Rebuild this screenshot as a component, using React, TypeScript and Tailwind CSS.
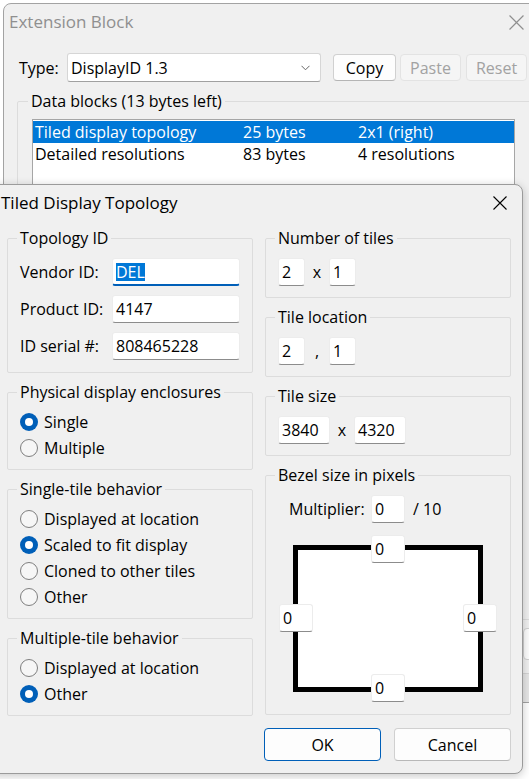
import React from "react";

const FONT = "font-['Open_Sans',sans-serif] text-[16px] text-black";

function CloseIcon({ size = 14, color = "#000" }: { size?: number; color?: string }) {
  return (
    <svg width={size} height={size} viewBox="0 0 14 14">
      <path d="M0.5 0.5 L13.5 13.5 M13.5 0.5 L0.5 13.5" stroke={color} strokeWidth="1.1" fill="none" />
    </svg>
  );
}

function Edit({
  value,
  className = "",
  focused = false,
}: {
  value: string;
  className?: string;
  focused?: boolean;
}) {
  return (
    <div
      className={`h-[28px] bg-white border border-[#ececec] rounded-[3px] flex items-center pl-[3px] leading-none ${
        focused ? "border-b-2 border-b-[#005fb8]" : "border-b-[#8c8c8c]"
      } ${className}`}
    >
      {focused ? <span className="bg-[#0078d7] text-white leading-[18px]">{value}</span> : value}
    </div>
  );
}

function Radio({ label, checked = false }: { label: string; checked?: boolean }) {
  return (
    <div className="h-[26px] flex items-center gap-[6px]">
      <span
        className={`w-[18px] h-[18px] rounded-full flex items-center justify-center ${
          checked ? "bg-[#005fb8]" : "border border-[#7f7f7f] bg-[#f6f6f6]"
        }`}
      >
        {checked && <span className="w-[8px] h-[8px] rounded-full bg-white" />}
      </span>
      <span>{label}</span>
    </div>
  );
}

function Group({
  title,
  children,
  className = "",
}: {
  title: string;
  children: React.ReactNode;
  className?: string;
}) {
  return (
    <fieldset className={`border border-[#dcdcdc] rounded-[2px] pl-[9px] pr-[9px] ${className}`}>
      <legend className="px-[3px] leading-[22px]">{title}</legend>
      <div className="pl-[3px]">{children}</div>
    </fieldset>
  );
}

function PairRow({ a, b, sep, wide = false }: { a: string; b: string; sep: string; wide?: boolean }) {
  const w = wide ? "w-[52px]" : "w-[27px]";
  return (
    <div className="flex items-center">
      <Edit value={a} className={w} />
      <span className="w-[24px] text-center">{sep}</span>
      <Edit value={b} className={w} />
    </div>
  );
}

function BackWindow() {
  const rows = [
    ["Tiled display topology", "25 bytes", "2x1 (right)"],
    ["Detailed resolutions", "83 bytes", "4 resolutions"],
  ];
  return (
    <div className="absolute left-[3px] top-[3px] w-[537px] h-[700px] bg-[#f0f0f0] border border-[#a3a3a3] rounded-tl-[8px] overflow-hidden">
      <div className="h-[36px] flex items-center justify-between pl-[5px]">
        <span className="text-[#8f8f8f] text-[17px]">Extension Block</span>
        <div className="w-[46px] h-full flex items-center justify-center">
          <CloseIcon size={15} color="#8f8f8f" />
        </div>
      </div>

      <div className="mt-[13px] pl-[15px] flex items-center h-[29px]">
        <span className="w-[48px]">Type:</span>
        <div className="w-[254px] h-[29px] bg-white border border-[#d6d6d6] border-b-[#a0a0a0] rounded-[3px] flex items-center justify-between pl-[3px] pr-[10px]">
          <span>DisplayID 1.3</span>
          <svg width="9" height="6" viewBox="0 0 9 6">
            <path d="M0.5 0.8 L4.5 4.8 L8.5 0.8" stroke="#666" strokeWidth="1" fill="none" />
          </svg>
        </div>
        <button className="ml-[12px] w-[63px] h-[27px] bg-[#fdfdfd] border border-[#d0d0d0] border-b-[#b5b5b5] rounded-[4px]">
          Copy
        </button>
        <button className="ml-[4px] w-[61px] h-[27px] bg-[#f5f5f5] border border-[#e3e3e3] rounded-[4px] text-[#a2a2a2]">
          Paste
        </button>
        <button className="ml-[5px] w-[61px] h-[27px] bg-[#f5f5f5] border border-[#e3e3e3] rounded-[4px] text-[#a2a2a2]">
          Reset
        </button>
      </div>

      <fieldset className="mt-[8px] ml-[13px] w-[515px] border border-[#dcdcdc] rounded-[2px] pl-[10px] pt-[7px]">
        <legend className="px-[3px] leading-[22px]">Data blocks (13 bytes left)</legend>
        <div className="ml-[4px] w-[483px] h-[420px] bg-white border border-[#a6a6a6] pt-[1px]">
          {rows.map((r, i) => (
            <div
              key={r[0]}
              className={`h-[22px] flex items-center pl-[2px] ${i === 0 ? "bg-[#0078d7] text-white" : ""}`}
            >
              <span className="w-[208px]">{r[0]}</span>
              <span className="w-[115px]">{r[1]}</span>
              <span>{r[2]}</span>
            </div>
          ))}
        </div>
        <div className="h-[80px]" />
      </fieldset>

      <div className="mt-[8px] flex">
        <div className="ml-[519px] w-[80px] h-[32px] bg-[#fdfdfd] border border-[#d0d0d0] rounded-[4px]" />
      </div>
      <div className="mt-[13px] h-[80px] bg-[#e6e6e6] border-t border-[#d4d4d4]" />
    </div>
  );
}

function TopologyDialog() {
  const idRows: [string, string, boolean][] = [
    ["Vendor ID:", "DEL", true],
    ["Product ID:", "4147", false],
    ["ID serial #:", "808465228", false],
  ];
  return (
    <div className="absolute left-[-8px] top-[184px] w-[531px] h-[590px] bg-[#f0f0f0] border border-[#9b9b9b] rounded-r-[8px] shadow-[0_2px_10px_rgba(0,0,0,0.22)]">
      <div className="h-[36px] flex items-center justify-between pl-[8px]">
        <span className="text-[17px]">Tiled Display Topology</span>
        <div className="w-[44px] h-full flex items-center justify-center">
          <CloseIcon />
        </div>
      </div>

      <div className="pt-[6px] pl-[14px]">
        <div className="w-[504px] grid grid-cols-[246px_246px] gap-x-[12px] items-start">
          <div className="flex flex-col gap-[8px]">
            <Group title="Topology ID" className="pt-[9px] pb-[12px]">
              <div className="flex flex-col gap-[9px]">
                {idRows.map(([label, value, focused]) => (
                  <div key={label} className="flex items-center">
                    <span className="w-[92px]">{label}</span>
                    <Edit value={value} focused={focused} className="w-[128px]" />
                  </div>
                ))}
              </div>
            </Group>
            <Group title="Physical display enclosures" className="pt-[6px] pb-[8px]">
              <Radio label="Single" checked />
              <Radio label="Multiple" />
            </Group>
            <Group title="Single-tile behavior" className="pt-[6px] pb-[8px]">
              <Radio label="Displayed at location" />
              <Radio label="Scaled to fit display" checked />
              <Radio label="Cloned to other tiles" />
              <Radio label="Other" />
            </Group>
            <Group title="Multiple-tile behavior" className="pt-[6px] pb-[8px]">
              <Radio label="Displayed at location" />
              <Radio label="Other" checked />
            </Group>
          </div>

          <div className="flex flex-col gap-[8px]">
            <Group title="Number of tiles" className="pt-[9px] pb-[11px]">
              <PairRow a="2" b="1" sep="x" />
            </Group>
            <Group title="Tile location" className="pt-[9px] pb-[11px]">
              <PairRow a="2" b="1" sep="," />
            </Group>
            <Group title="Tile size" className="pt-[9px] pb-[11px]">
              <PairRow a="3840" b="4320" sep="x" wide />
            </Group>
            <Group title="Bezel size in pixels" className="pt-[9px] pb-[12px]">
              <div className="flex items-center h-[28px]">
                <span className="w-[93px] pl-[11px]">Multiplier:</span>
                <Edit value="0" className="w-[34px]" />
                <span className="ml-[8px]">/ 10</span>
              </div>
              <div className="relative mt-[12px] h-[167px]">
                <div className="absolute left-[15px] top-[10px] w-[190px] h-[147px] border-[5px] border-black bg-white" />
                <Edit value="0" className="absolute left-[93px] top-0 w-[34px]" />
                <Edit value="0" className="absolute left-[1px] top-[69px] w-[34px]" />
                <Edit value="0" className="absolute left-[185px] top-[69px] w-[34px]" />
                <Edit value="0" className="absolute left-[93px] top-[139px] w-[34px]" />
              </div>
            </Group>
          </div>
        </div>

        <div className="w-[504px] mt-[12px] flex justify-end gap-[13px]">
          <button className="w-[117px] h-[33px] bg-[#fdfdfd] border border-[#005fb8] rounded-[4px]">OK</button>
          <button className="w-[117px] h-[33px] bg-[#fdfdfd] border border-[#d0d0d0] border-b-[#b8b8b8] rounded-[4px]">
            Cancel
          </button>
        </div>
      </div>
    </div>
  );
}

export default function App() {
  return (
    <div className={`relative w-[529px] h-[779px] overflow-hidden bg-white ${FONT}`}>
      <BackWindow />
      <TopologyDialog />
    </div>
  );
}
